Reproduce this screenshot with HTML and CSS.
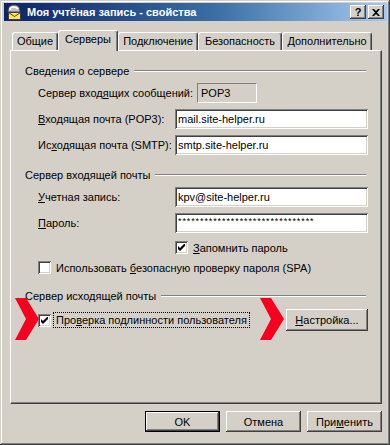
FILE: index.html
```html
<!DOCTYPE html>
<html lang="ru">
<head>
    <meta charset="UTF-8">
    <title>Моя учтёная запись - свойства</title>
    <link rel="stylesheet" href="styles.css">
</head>
<body>
    <div class="window">
        <div class="titlebar">
            <svg class="app-icon" width="16" height="16" viewBox="0 0 16 16">
                <path d="M2 8 C2 3 4 1 8 1 C12 1 14 3 14 8 Z" fill="#c0c0c0" stroke="#404040" stroke-width="1"/>
                <path d="M4 6 C4 4 6 3 8 3 C10 3 11 4 12 5" fill="none" stroke="#fff" stroke-width="1.5"/>
                <rect x="2.5" y="8.5" width="12" height="7" fill="#ffe45c" stroke="#404040"/>
                <path d="M2.5 8.5 L8.5 12.5 L14.5 8.5" fill="none" stroke="#404040"/>
            </svg>
            <span class="title">Моя учтёная запись - свойства</span>
            <div class="caption-buttons">
                <span class="caption-btn">?</span>
                <span class="caption-btn">
                    <svg width="8" height="7" viewBox="0 0 8 7">
                        <path d="M0 0 L2 0 L4 2 L6 0 L8 0 L5 3.5 L8 7 L6 7 L4 5 L2 7 L0 7 L3 3.5 Z" fill="#000"/>
                    </svg>
                </span>
            </div>
        </div>

        <div class="tabs">
            <div class="tab tab-general">Общие</div>
            <div class="tab tab-servers active">Серверы</div>
            <div class="tab tab-connection">Подключение</div>
            <div class="tab tab-security">Безопасность</div>
            <div class="tab tab-advanced">Дополнительно</div>
        </div>

        <div class="page">
            <div class="group-title"><span>Сведения о сервере</span></div>
            <div class="group">
                <div class="field">
                    <label>Сервер вход<u>я</u>щих сообщений:</label>
                    <div class="static">POP3</div>
                </div>
                <div class="field">
                    <label><u>В</u>ходящая почта (POP3):</label>
                    <div class="input">mail.site-helper.ru</div>
                </div>
                <div class="field">
                    <label>Ис<u>х</u>одящая почта (SMTP):</label>
                    <div class="input">smtp.site-helper.ru</div>
                </div>
            </div>

            <div class="group-title second"><span>Сервер входящей почты</span></div>
            <div class="group">
                <div class="field">
                    <label><u>У</u>четная запись:</label>
                    <div class="input">kpv@site-helper.ru</div>
                </div>
                <div class="field">
                    <label><u>П</u>ароль:</label>
                    <div class="input password">*******************************</div>
                </div>
                <div class="check-row indent">
                    <span class="checkbox checked">
                        <svg width="7" height="7" viewBox="0 0 7 7"><path d="M0 2 L2 4 L7 -1 L7 2 L2 7 L0 5 Z" fill="#000"/></svg>
                    </span>
                    <span class="check-label"><u>З</u>апомнить пароль</span>
                </div>
                <div class="check-row spa">
                    <span class="checkbox"></span>
                    <span class="check-label">Использовать <u>б</u>езопасную проверку пароля (SPA)</span>
                </div>
            </div>

            <div class="group-title third"><span>Сервер исходящей почты</span></div>
            <div class="group">
                <div class="auth-row">
                    <svg class="marker marker-left" width="24" height="42" viewBox="0 0 24 42">
                        <path d="M0 0 L11 0 L24 21 L11 42 L0 42 L11 21 Z" fill="#f5001e"/>
                    </svg>
                    <span class="checkbox checked">
                        <svg width="7" height="7" viewBox="0 0 7 7"><path d="M0 2 L2 4 L7 -1 L7 2 L2 7 L0 5 Z" fill="#000"/></svg>
                    </span>
                    <span class="check-label focused">Про<u>в</u>ерка подлинности пользователя</span>
                    <svg class="marker marker-right" width="24" height="42" viewBox="0 0 24 42">
                        <path d="M0 0 L11 0 L24 21 L11 42 L0 42 L11 21 Z" fill="#f5001e"/>
                    </svg>
                    <button class="btn settings"><u>Н</u>астройка...</button>
                </div>
            </div>
        </div>

        <div class="actions">
            <button class="btn default">OK</button>
            <button class="btn">Отмена</button>
            <button class="btn">При<u>м</u>енить</button>
        </div>
    </div>
</body>
</html>
```

FILE: styles.css
```css
body {
    margin: 0;
    background-color: #d4d0c8;
    font-family: "Liberation Sans", Arial, sans-serif;
    font-size: 11px;
    color: #000;
}
.window {
    width: 390px;
    height: 445px;
    box-sizing: border-box;
    padding: 3px 3px 3px 4px;
    display: flex;
    flex-direction: column;
    background-color: #d4d0c8;
    box-shadow: inset -1px -1px #404040, inset 1px 1px #d4d0c8, inset -2px -2px #808080, inset 2px 2px #fff;
}
.titlebar {
    height: 18px;
    display: flex;
    align-items: center;
    padding: 0 3px 0 2px;
    background: linear-gradient(to right, #0a246a 0%, #3a6ea5 55%, #a6caf0 100%);
    color: #fff;
}
.app-icon {
    display: block;
    margin-right: 5px;
}
.title {
    font-weight: bold;
    font-size: 11px;
    flex: 1;
}
.caption-buttons {
    display: flex;
    gap: 2px;
}
.caption-btn {
    width: 16px;
    height: 14px;
    box-sizing: border-box;
    display: flex;
    align-items: center;
    justify-content: center;
    background-color: #d4d0c8;
    color: #000;
    font-weight: bold;
    font-size: 11px;
    box-shadow: inset -1px -1px #404040, inset 1px 1px #fff, inset -2px -2px #808080, inset 2px 2px #d4d0c8;
}
.tabs {
    height: 20px;
    margin-top: 9px;
    padding-left: 8px;
    display: flex;
    align-items: flex-end;
}
.tab {
    height: 18px;
    box-sizing: border-box;
    border-top: 1px solid #fff;
    border-left: 1px solid #fff;
    border-right: 1px solid #404040;
    border-radius: 3px 3px 0 0;
    box-shadow: inset -1px 0 #808080;
    text-align: center;
    line-height: 17px;
}
.tab.active {
    height: 21px;
    margin-bottom: -1px;
    position: relative;
    z-index: 1;
    background-color: #d4d0c8;
    line-height: 17px;
}
.tab-general { width: 46px; }
.tab-servers { width: 60px; }
.tab-connection { width: 80px; }
.tab-security { width: 84px; }
.tab-advanced { width: 90px; }
.page {
    flex: 1;
    margin: 0 5px 0 6px;
    padding: 13px 13px 0 14px;
    border-top: 1px solid #fff;
    border-left: 1px solid #fff;
    border-right: 1px solid #404040;
    border-bottom: 1px solid #404040;
    box-shadow: inset -1px -1px #808080;
}
.group-title {
    height: 14px;
    display: flex;
    align-items: center;
}
.group-title::after {
    content: "";
    flex: 1;
    margin: 0 2px 0 5px;
    border-top: 1px solid #808080;
    border-bottom: 1px solid #fff;
}
.group-title.second {
    margin-top: 13px;
}
.group-title.third {
    margin-top: 15px;
}
.group {
    padding-left: 13px;
    margin-top: 5px;
}
.field {
    height: 20px;
    display: flex;
    align-items: center;
    margin-bottom: 6px;
}
.field:last-of-type {
    margin-bottom: 0;
}
.field label {
    width: 137px;
    flex-shrink: 0;
    white-space: nowrap;
}
.static {
    width: 60px;
    height: 20px;
    margin-left: 22px;
    box-sizing: border-box;
    padding-left: 3px;
    line-height: 18px;
    border-top: 1px solid #808080;
    border-left: 1px solid #808080;
    border-right: 1px solid #fff;
    border-bottom: 1px solid #fff;
}
.input {
    flex: 1;
    height: 20px;
    box-sizing: border-box;
    padding-left: 3px;
    line-height: 20px;
    background-color: #fff;
    box-shadow: inset 1px 1px #808080, inset -1px -1px #fff, inset 2px 2px #404040, inset -2px -2px #d4d0c8;
    white-space: nowrap;
    overflow: hidden;
}
.input.password {
    font-size: 9px;
    letter-spacing: 0.9px;
    line-height: 16px;
}
.check-row {
    display: flex;
    align-items: center;
    height: 13px;
}
.check-row.indent {
    margin-top: 8px;
    padding-left: 137px;
}
.check-row.spa {
    margin-top: 7px;
}
.checkbox {
    width: 13px;
    height: 13px;
    box-sizing: border-box;
    flex-shrink: 0;
    display: flex;
    align-items: center;
    justify-content: center;
    background-color: #fff;
    box-shadow: inset 1px 1px #808080, inset -1px -1px #fff, inset 2px 2px #404040, inset -2px -2px #d4d0c8;
}
.check-label {
    margin-left: 5px;
}
.auth-row {
    position: relative;
    height: 22px;
    margin-top: 6px;
    display: flex;
    align-items: center;
}
.check-label.focused {
    margin-left: 2px;
    padding: 1px 2px;
    border: 1px dotted #000;
}
.marker {
    position: absolute;
    top: -11px;
}
.marker-left {
    left: -23px;
}
.marker-right {
    left: 222px;
}
.btn {
    width: 75px;
    height: 21px;
    box-sizing: border-box;
    padding: 0;
    border: none;
    background-color: #d4d0c8;
    font-family: "Liberation Sans", Arial, sans-serif;
    font-size: 11px;
    color: #000;
    box-shadow: inset -1px -1px #404040, inset 1px 1px #fff, inset -2px -2px #808080, inset 2px 2px #d4d0c8;
}
.btn.settings {
    width: 82px;
    height: 22px;
    margin-left: auto;
}
.btn.default {
    border: 1px solid #000;
}
.actions {
    display: flex;
    justify-content: flex-end;
    gap: 6px;
    margin: 7px 5px 10px 0;
}
```
